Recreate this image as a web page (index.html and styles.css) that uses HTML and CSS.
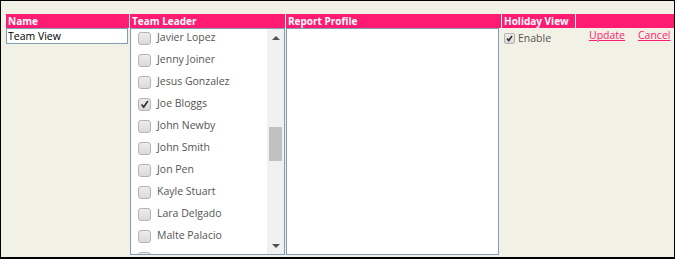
FILE: index.html
```html
<!DOCTYPE html>
<html lang="en">
<head>
    <meta charset="UTF-8">
    <title>Team View</title>
    <link rel="stylesheet" href="styles.css">
</head>
<body>
    <div class="frame">
        <div class="grid">
            <div class="th">Name</div>
            <div class="th">Team Leader</div>
            <div class="th">Report Profile</div>
            <div class="th">Holiday View</div>
            <div class="th"></div>

            <div class="td">
                <input type="text" class="name-input" value="Team View">
            </div>
            <div class="td">
                <div class="listbox">
                    <div class="list-items">
                        <label class="list-item"><span class="cb"></span>Javier Lopez</label>
                        <label class="list-item"><span class="cb"></span>Jenny Joiner</label>
                        <label class="list-item"><span class="cb"></span>Jesus Gonzalez</label>
                        <label class="list-item"><span class="cb checked"><svg viewBox="0 0 13 13"><path d="M3 6.5 L5.5 9.5 L10.5 2.5" /></svg></span>Joe Bloggs</label>
                        <label class="list-item"><span class="cb"></span>John Newby</label>
                        <label class="list-item"><span class="cb"></span>John Smith</label>
                        <label class="list-item"><span class="cb"></span>Jon Pen</label>
                        <label class="list-item"><span class="cb"></span>Kayle Stuart</label>
                        <label class="list-item"><span class="cb"></span>Lara Delgado</label>
                        <label class="list-item"><span class="cb"></span>Malte Palacio</label>
                        <label class="list-item"><span class="cb"></span></label>
                    </div>
                    <div class="scrollbar">
                        <div class="arrow up"></div>
                        <div class="track"><div class="thumb"></div></div>
                        <div class="arrow down"></div>
                    </div>
                </div>
            </div>
            <div class="td">
                <div class="profile-box"></div>
            </div>
            <div class="td holiday">
                <label class="enable"><span class="cb small checked"><svg viewBox="0 0 11 11"><path d="M2.5 5.5 L4.5 8 L8.5 2.5" /></svg></span>Enable</label>
            </div>
            <div class="td actions">
                <a href="#">Update</a>
                <a href="#">Cancel</a>
            </div>
        </div>
    </div>
</body>
</html>
```

FILE: styles.css
```css
html, body {
    margin: 0;
    padding: 0;
}
body {
    font-family: 'Open Sans', sans-serif;
    font-size: 10.5px;
    color: #555;
}
.frame {
    width: 675px;
    height: 259px;
    box-sizing: border-box;
    border: 1px solid #000;
    border-bottom-width: 2px;
    background-color: #f2f1e6;
    padding: 13px 0 0 5px;
    overflow: hidden;
}
.grid {
    display: grid;
    grid-template-columns: 123px 155px 215px 73px 1fr;
    grid-template-rows: 14px auto;
    column-gap: 1px;
}
.th {
    background-color: #ff1a72;
    color: #fff;
    font-weight: bold;
    font-size: 10px;
    line-height: 14px;
    padding-left: 2px;
    white-space: nowrap;
}
.name-input {
    display: block;
    width: 122px;
    height: 16px;
    box-sizing: border-box;
    border: 1px solid #7f9db9;
    padding: 0 1px;
    margin: 0;
    font-family: 'Open Sans', sans-serif;
    font-size: 10.5px;
    color: #000;
    background: #fff;
    outline: none;
}
.listbox {
    display: flex;
    width: 155px;
    height: 227px;
    box-sizing: border-box;
    border: 1px solid #7f9db9;
    background: #fff;
}
.list-items {
    flex: 1;
    overflow: hidden;
    padding-left: 7px;
}
.list-item {
    display: flex;
    align-items: flex-start;
    height: 22px;
    padding-top: 2px;
    box-sizing: border-box;
    line-height: 12px;
    white-space: nowrap;
}
.cb {
    display: inline-block;
    flex: none;
    width: 13px;
    height: 13px;
    margin-top: 1px;
    box-sizing: border-box;
    border: 1px solid #b4b4b4;
    border-radius: 3px;
    background: linear-gradient(#ececec, #dadada);
    margin-right: 6px;
}
.cb svg {
    display: block;
    width: 100%;
    height: 100%;
}
.cb svg path {
    fill: none;
    stroke: #333;
    stroke-width: 2;
}
.cb.small {
    width: 11px;
    height: 11px;
    margin-top: 0;
    border-radius: 2px;
    margin-right: 3px;
}
.scrollbar {
    display: flex;
    flex-direction: column;
    width: 17px;
    background: #f1f1f1;
}
.arrow {
    height: 17px;
    display: flex;
    align-items: center;
    justify-content: center;
}
.arrow::before {
    content: '';
    border-left: 4px solid transparent;
    border-right: 4px solid transparent;
}
.arrow.up::before {
    border-bottom: 4px solid #505050;
}
.arrow.down::before {
    border-top: 4px solid #505050;
}
.track {
    flex: 1;
    padding: 81px 2px 0;
}
.thumb {
    height: 34px;
    background: #c1c1c1;
}
.profile-box {
    width: 213px;
    height: 227px;
    box-sizing: border-box;
    border: 1px solid #7f9db9;
    background: #fff;
}
.holiday {
    padding: 5px 0 0 2px;
}
.enable {
    display: flex;
    align-items: center;
    line-height: 11px;
}
.actions {
    display: flex;
    gap: 13px;
    padding: 1px 0 0 13px;
    line-height: 12px;
}
.actions a {
    color: #ff1a72;
    text-decoration: underline;
}
```
